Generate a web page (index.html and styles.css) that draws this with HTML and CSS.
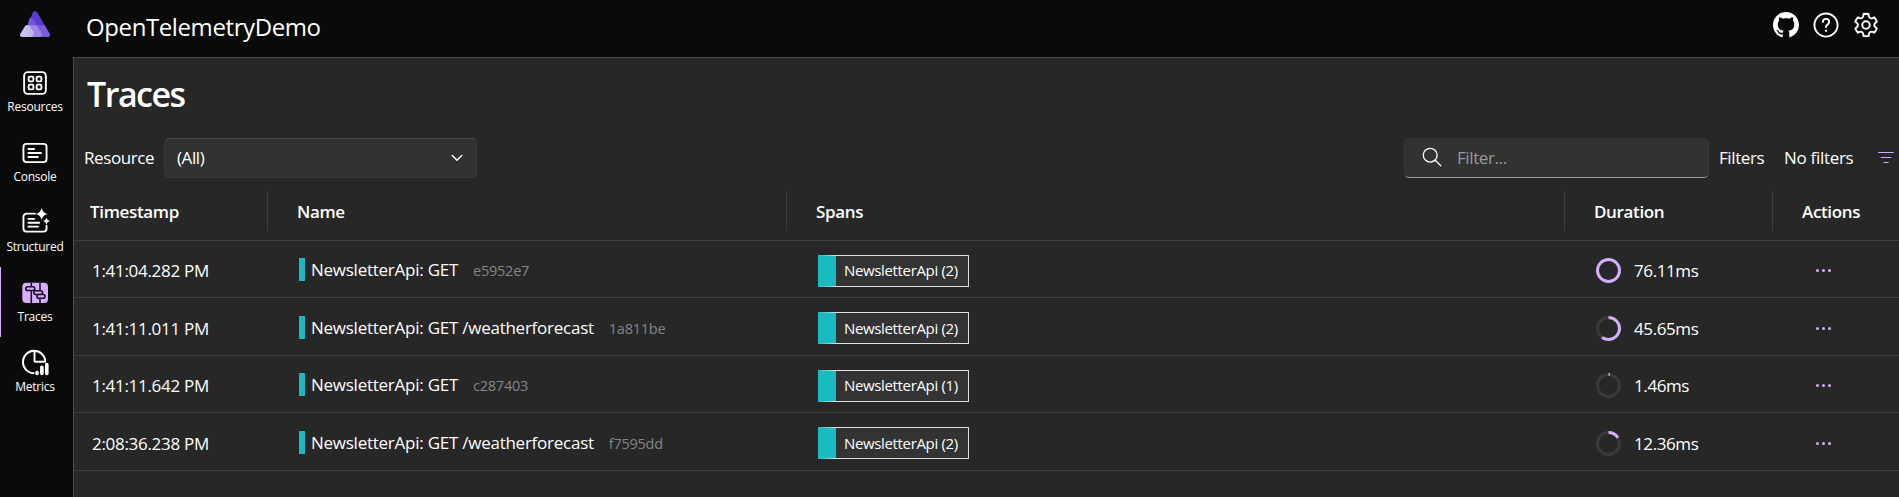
FILE: index.html
```html
<!DOCTYPE html>
<html lang="en">
<head>
<meta charset="utf-8">
<title>OpenTelemetryDemo traces</title>
<link rel="stylesheet" href="styles.css">
</head>
<body>
<div class="app">
  <header class="header">
    <div class="logo">
      <svg width="30" height="27" viewBox="0 0 30 27">
        <defs>
          <linearGradient id="lg1" x1="0" y1="0" x2="1" y2="0"><stop offset="0" stop-color="#d3c8f3"/><stop offset="1" stop-color="#bcaee9"/></linearGradient>
        </defs>
        <path d="M12.600 1.700a2.800 2.800 0 0 1 4.800 0L29.600 22.800a2.100 2.100 0 0 1-1.900 3.200H4z" fill="#5a3bd0"/>
        <path d="M7.300 14.200h17.300l5 8.600a2.100 2.100 0 0 1-1.900 3.200H7z" fill="#7a5be0"/>
        <path d="M9.200 7.800a2.200 2.200 0 0 1 3.800 0l8.700 15a2.100 2.100 0 0 1-1.900 3.200H5z" fill="#7453dc"/>
        <path d="M5.600 14.200h11.100l5 8.600a2.100 2.100 0 0 1-1.900 3.200H5z" fill="#9c84e8"/>
        <path d="M5.100 14.900a2 2 0 0 1 1.500-.7h1.800c.8 0 1.300.4 1.700 1l3 4.900c1.800 3-.2 5.900-2.200 5.900H2.300A2.100 2.100 0 0 1 .4 22.800z" fill="url(#lg1)"/>
      </svg>
    </div>
    <div class="app-name">OpenTelemetryDemo</div>
    <div class="header-actions">
      <svg class="github" width="26" height="26" viewBox="0 0 16 16"><path fill="#fff" d="M8 0C3.580 0 0 3.580 0 8c0 3.540 2.290 6.530 5.470 7.590.4.070.55-.17.55-.38 0-.19-.01-.82-.01-1.490-2.010.37-2.530-.49-2.690-.94-.09-.23-.48-.94-.82-1.130-.28-.15-.68-.52-.01-.53.63-.01 1.080.58 1.230.82.72 1.210 1.870.87 2.330.66.070-.52.28-.87.51-1.070-1.780-.2-3.640-.89-3.640-3.950 0-.87.31-1.590.82-2.150-.08-.2-.36-1.020.08-2.120 0 0 .67-.21 2.200.82.640-.18 1.320-.27 2-.27s1.360.09 2 .27c1.530-1.040 2.200-.82 2.200-.82.44 1.100.16 1.920.08 2.120.51.56.82 1.270.82 2.150 0 3.070-1.870 3.750-3.650 3.950.29.25.54.73.54 1.480 0 1.070-.01 1.930-.01 2.200 0 .21.15.46.55.38A8.010 8.010 0 0 0 16 8c0-4.420-3.580-8-8-8z"/></svg>
      <svg width="30" height="30" viewBox="0 0 24 24" fill="none" stroke="#fff" stroke-width="1.500" stroke-linecap="round"><circle cx="12" cy="12" r="9.250"/><path d="M9.500 9.600a2.500 2.500 0 1 1 5 0c0 1.900-2.500 2-2.500 4"/><circle cx="12" cy="16.500" r=".95" fill="#fff" stroke="none"/></svg>
      <svg width="30" height="30" viewBox="0 0 24 24" fill="none" stroke="#fff" stroke-width="1.500"><path d="M12.010 3c.7 0 1.380.08 2.060.23l.2 1.620a2.130 2.130 0 0 0 3 1.620l1.350-.6a8.800 8.800 0 0 1 2.050 3.530l-1.200.9a2.130 2.130 0 0 0 0 3.420l1.200.9a8.800 8.800 0 0 1-2.050 3.530l-1.360-.6a2.130 2.130 0 0 0-2.980 1.730l-.17 1.460a8.800 8.800 0 0 1-4.100 0l-.17-1.450a2.130 2.130 0 0 0-2.980-1.730l-1.360.6a8.800 8.800 0 0 1-2.050-3.540l1.200-.9a2.130 2.130 0 0 0 0-3.420l-1.200-.9a8.800 8.800 0 0 1 2.050-3.530l1.360.6a2.130 2.130 0 0 0 2.980-1.740l.17-1.500c.66-.14 1.330-.22 2-.23z"/><circle cx="12" cy="12" r="3"/></svg>
    </div>
  </header>
  <div class="body">
    <nav class="nav">
      <a class="nav-item">
        <svg width="30" height="30" viewBox="0 0 24 24" fill="none" stroke="#fff" stroke-width="1.500"><rect x="3.300" y="3.300" width="17.400" height="17.400" rx="3"/><rect x="6.900" y="6.900" width="3.800" height="3.800" rx=".9"/><rect x="13.300" y="6.900" width="3.800" height="3.800" rx=".9"/><rect x="6.900" y="13.300" width="3.800" height="3.800" rx=".9"/><rect x="13.300" y="13.300" width="3.800" height="3.800" rx=".9"/></svg>
        <span>Resources</span>
      </a>
      <a class="nav-item">
        <svg width="30" height="30" viewBox="0 0 24 24" fill="none" stroke="#fff" stroke-width="1.500" stroke-linecap="round"><rect x="2.750" y="4.700" width="18.500" height="14.600" rx="2.500"/><path d="M6.700 8.800h4.600M6.700 12h10.100M6.700 15.200h7.600"/></svg>
        <span>Console</span>
      </a>
      <a class="nav-item">
        <svg width="30" height="30" viewBox="0 0 24 24" fill="none" stroke="#fff" stroke-width="1.500" stroke-linecap="round"><path d="M12 4.500H5.250a2.500 2.500 0 0 0-2.500 2.500v9.400a2.500 2.500 0 0 0 2.500 2.500h13.500a2.500 2.500 0 0 0 2.500-2.500v-2.200"/><path d="M6.700 8.700h4.600M6.700 11.800h8.600M6.700 14.900h7.600"/><path fill="#fff" stroke="none" d="M17.300 0q.9 3.900 4.700 4.800-3.800.9-4.700 4.800-.9-3.900-4.700-4.800 3.800-.9 4.700-4.800zM21.200 7.700q.5 2.200 2.700 2.700-2.200.5-2.700 2.700-.5-2.200-2.700-2.700 2.200-.5 2.700-2.700z"/></svg>
        <span>Structured</span>
      </a>
      <a class="nav-item nav-item-active">
        <svg width="30" height="30" viewBox="0 0 30 30"><rect x="2.300" y="4.800" width="25.700" height="20.300" rx="4" fill="#d6adff"/><g fill="none" stroke="#15101c" stroke-width="1.500"><path d="M11.300 4.800v4.200M11.300 13v12M20 4.800v7.500M20 20.500v4.500" /><g fill="#d6adff"><rect x="5.800" y="8.800" width="9" height="3.800" rx="1.900"/><rect x="13.800" y="12.700" width="8.800" height="3.800" rx="1.900"/><rect x="17" y="16.600" width="8" height="3.700" rx="1.850"/></g></g></svg>
        <span>Traces</span>
      </a>
      <a class="nav-item">
        <svg width="30" height="30" viewBox="0 1 30 30" fill="none" stroke="#fff" stroke-width="1.900"><path d="M14.300 26.200A11.200 11.200 0 1 1 25.300 14.500M14.500 3.800v10.200q0 .8.800.8h10.500"/><g stroke-width="3.600" stroke-linecap="round"><path d="M17 25.500v1M21.900 20.300v6.200M26.800 17.500v9"/></g></svg>
        <span>Metrics</span>
      </a>
    </nav>
    <main class="main">
      <h1 class="page-title">Traces</h1>
      <div class="toolbar">
        <label class="toolbar-label">Resource</label>
        <div class="select"><span>(All)</span>
          <svg width="12" height="8" viewBox="0 0 12 8" fill="none" stroke="#fff" stroke-width="1.500" stroke-linecap="round"><path d="M1.300 1.500 6 6.200l4.700-4.700"/></svg>
        </div>
        <div class="search">
          <svg width="20" height="20" viewBox="0 0 20 20" fill="none" stroke="#fff" stroke-width="1.300" stroke-linecap="round"><circle cx="8.200" cy="8.200" r="6.900"/><path d="m13.200 13.200 5.600 5.600"/></svg>
          <span>Filter...</span>
        </div>
        <span class="filters-label">Filters</span>
        <span class="filters-value">No filters</span>
        <svg width="18" height="14" viewBox="0 0 18 14" fill="none" stroke="#d0a8f8" stroke-width="1.200" stroke-linecap="round"><path d="M1.600 1.500h14.800M4.200 6.500h9.600M6.800 11.500h4.400"/></svg>
      </div>
      <div class="grid">
        <div class="row row-head">
          <div class="head">Timestamp</div><div class="head">Name</div><div class="head">Spans</div><div class="head">Duration</div><div class="head">Actions</div>
        </div>
        <div class="row">
          <div class="time">1:41:04.282 PM</div>
          <div class="name"><i class="bar"></i><span>NewsletterApi: GET</span><small>e5952e7</small></div>
          <div class="spans"><span class="badge">NewsletterApi (2)</span></div>
          <div class="duration"><svg class="ring" width="25" height="25" viewBox="0 0 25 25"><circle class="ring-track" cx="12.500" cy="12.500" r="11"/><circle class="ring-value" cx="12.500" cy="12.500" r="11" pathLength="100" stroke-dasharray="100 0"/></svg><span>76.11ms</span></div>
          <div class="more"><i></i><i></i><i></i></div>
        </div>
        <div class="row row-tall">
          <div class="time">1:41:11.011 PM</div>
          <div class="name"><i class="bar"></i><span>NewsletterApi: GET /weatherforecast</span><small>1a811be</small></div>
          <div class="spans"><span class="badge">NewsletterApi (2)</span></div>
          <div class="duration"><svg class="ring" width="25" height="25" viewBox="0 0 25 25"><circle class="ring-track" cx="12.500" cy="12.500" r="11"/><circle class="ring-value" cx="12.500" cy="12.500" r="11" pathLength="100" stroke-dasharray="60 40"/></svg><span>45.65ms</span></div>
          <div class="more"><i></i><i></i><i></i></div>
        </div>
        <div class="row">
          <div class="time">1:41:11.642 PM</div>
          <div class="name"><i class="bar"></i><span>NewsletterApi: GET</span><small>c287403</small></div>
          <div class="spans"><span class="badge">NewsletterApi (1)</span></div>
          <div class="duration"><svg class="ring" width="25" height="25" viewBox="0 0 25 25"><circle class="ring-track" cx="12.500" cy="12.500" r="11"/><circle class="ring-value" cx="12.500" cy="12.500" r="11" pathLength="100" stroke-dasharray="1.900 98.100"/></svg><span>1.46ms</span></div>
          <div class="more"><i></i><i></i><i></i></div>
        </div>
        <div class="row row-tall">
          <div class="time">2:08:36.238 PM</div>
          <div class="name"><i class="bar"></i><span>NewsletterApi: GET /weatherforecast</span><small>f7595dd</small></div>
          <div class="spans"><span class="badge">NewsletterApi (2)</span></div>
          <div class="duration"><svg class="ring" width="25" height="25" viewBox="0 0 25 25"><circle class="ring-track" cx="12.500" cy="12.500" r="11"/><circle class="ring-value" cx="12.500" cy="12.500" r="11" pathLength="100" stroke-dasharray="16.200 83.800"/></svg><span>12.36ms</span></div>
          <div class="more"><i></i><i></i><i></i></div>
        </div>
      </div>
    </main>
  </div>
</div>
</body>
</html>
```
FILE: styles.css
```css
* { box-sizing: border-box; }
body {
  margin: 0;
  background: #0a0a0a;
  color: #fff;
  font: 17px/24px "Open Sans", "Noto Sans", sans-serif;
  letter-spacing: -0.4px;
  overflow: hidden;
}
svg { display: block; flex: none; }
.app { height: 497px; display: flex; flex-direction: column; }
.header { height: 57px; flex: none; display: flex; }
.logo { width: 86px; padding: 11px 0 0 20px; }
.app-name { font-size: 24px; line-height: 34px; padding-top: 10px; letter-spacing: -0.4px; }
.header-actions { margin-left: auto; display: flex; align-items: center; gap: 10px; padding: 0 18px 7px 0; }
.github { margin-right: 2px; }
.body { flex: 1; display: flex; min-height: 0; }
.nav { width: 73px; flex: none; display: flex; flex-direction: column; }
.nav-item {
  height: 70px;
  width: 69px;
  padding-top: 11px;
  border-left: 1px solid transparent;
  display: flex;
  flex-direction: column;
  align-items: center;
  font-size: 12px;
  line-height: 18px;
  letter-spacing: -0.25px;
}
.nav-item-active { border-left-color: #d6adff; }
.main { flex: 1; background: #272727; border-top: 1px solid #4c4c4c; border-left: 1px solid #4c4c4c; min-width: 0; }
.page-title { margin: 0; padding: 13px 0 0 13px; height: 80px; font-size: 34px; line-height: 46px; font-weight: 600; letter-spacing: -1.5px; }
.toolbar { height: 40px; display: flex; align-items: center; padding-right: 4px; }
.toolbar-label { width: 90px; padding-left: 10px; }
.select {
  width: 313px;
  height: 40px;
  padding: 0 13px 0 12px;
  display: flex;
  align-items: center;
  justify-content: space-between;
  background: #323232;
  border: 1px solid #383838;
  border-top-color: #4a4a4a;
  border-radius: 5px;
}
.search {
  width: 305px;
  height: 40px;
  margin-left: auto;
  padding-left: 17px;
  display: flex;
  align-items: center;
  gap: 15px;
  background: #323232;
  border: 1px solid #383838;
  border-bottom-color: #9a9a9a;
  border-radius: 5px;
  color: #9a9a9a;
}
.search svg { margin-top: -3px; }
.filters-label { width: 65px; padding-left: 10px; }
.filters-value { width: 103px; padding-left: 10px; letter-spacing: -0.3px; }
.grid { padding-top: 5px; }
.row {
  display: grid;
  grid-template-columns: 194px 519px 778px 208px 1fr;
  height: 57px;
  border-bottom: 1px solid #3d3d3d;
}
.row-head { height: 58px; font-weight: 600; }
.head { height: 40px; margin-top: 8px; padding: 9px 0 0 29px; border-right: 1px solid #3d3d3d; letter-spacing: -0.35px; }
.head:first-child { padding-left: 16px; }
.head:last-child { border-right: 0; }
.time { padding: 18px 0 0 18px; letter-spacing: -0.3px; }
.name { display: flex; padding: 17px 0 0 31px; letter-spacing: -0.25px; }
.name span { margin: 0 0 0 6px; }
.name small { margin: 0 0 0 15px; font-size: 14.5px; line-height: 25px; color: #858585; letter-spacing: -0.25px; }
.bar { width: 6px; height: 23px; background: #1abac0; }
.spans { padding: 14px 0 0 31px; }
.badge {
  display: block;
  width: 151px;
  height: 32px;
  padding-left: 8px;
  background: #333;
  border: 1px solid #dedede;
  border-left: 18px solid #1abac0;
  font-size: 15px;
  line-height: 29px;
  letter-spacing: -0.35px;
}
.duration { display: flex; padding: 17px 0 0 31px; }
.duration span { margin: 1px 0 0 13px; }
.ring { transform: rotate(-90deg); }
.ring circle { fill: none; stroke-width: 3; }
.ring .ring-track { stroke: #3a3a3a; }
.ring .ring-value { stroke: #d6adff; }
.more { display: flex; gap: 3.2px; padding: 28px 0 0 43px; }
.more i { width: 3px; height: 3px; border-radius: 50%; background: #d6adff; }
.row-tall { height: 58px; }
.row-tall .time { padding-top: 19px; }
.row-tall .name, .row-tall .duration { padding-top: 18px; }
.row-tall .more { padding-top: 29px; }
.row-tall .badge { line-height: 31px; }
```
